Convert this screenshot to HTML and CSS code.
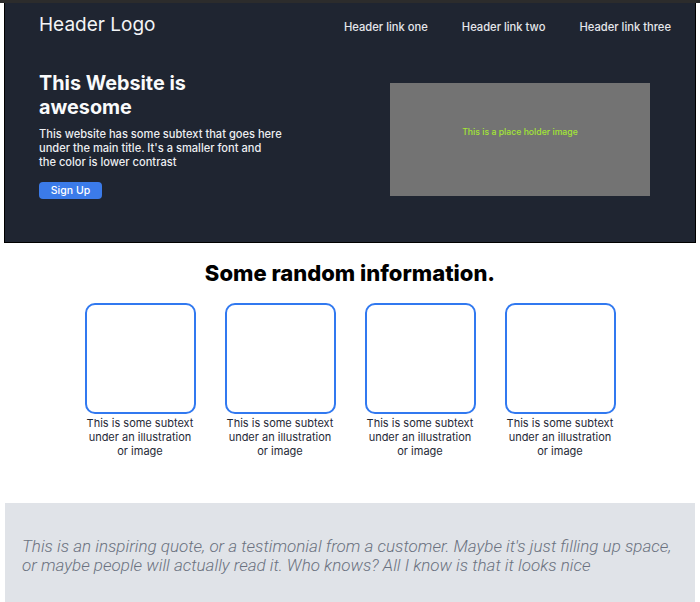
FILE: index.html
```html
<!DOCTYPE html>
<html lang="en">
<head>
<meta charset="utf-8">
<title>This Website is awesome</title>
<link rel="stylesheet" href="styles.css">
</head>
<body>
<div class="topstrip"></div>
<header class="hero">
  <nav class="nav">
    <div class="logo">Header Logo</div>
    <ul class="links">
      <li><a href="#">Header link one</a></li>
      <li><a href="#">Header link two</a></li>
      <li><a href="#">Header link three</a></li>
    </ul>
  </nav>
  <div class="hero-body">
    <div class="hero-text">
      <h1 class="hero-title">This Website is awesome</h1>
      <p class="hero-sub">This website has some subtext that goes here under the main title. It's a smaller font and<br>the color is lower contrast</p>
      <button class="btn">Sign Up</button>
    </div>
    <div class="placeholder">This is a place holder image</div>
  </div>
</header>
<section class="info">
  <h2 class="info-title">Some random information.</h2>
  <div class="cards">
    <div class="card"><div class="card-box"></div><p class="card-text">This is some subtext under an illustration or image</p></div>
    <div class="card"><div class="card-box"></div><p class="card-text">This is some subtext under an illustration or image</p></div>
    <div class="card"><div class="card-box"></div><p class="card-text">This is some subtext under an illustration or image</p></div>
    <div class="card"><div class="card-box"></div><p class="card-text">This is some subtext under an illustration or image</p></div>
  </div>
</section>
<section class="quote">
  <p class="quote-text">This is an inspiring quote, or a testimonial from a customer. Maybe it's just filling up space, or maybe people will actually read it. Who knows? All I know is that it looks nice</p>
</section>
</body>
</html>
```
FILE: styles.css
```css
* { box-sizing: border-box; }
html, body { margin: 0; padding: 0; }
body {
  background: #ffffff;
  font-family: Inter, "Liberation Sans", sans-serif;
  color: #111;
  overflow: hidden;
}
.topstrip {
  height: 3px;
  background: #2c2c2c;
}
.hero {
  margin: 0 4px 0 4px;
  background: #1f2531;
  border: 1px solid #000;
  border-top: none;
  padding: 10px 24px 43px 34px;
}
.nav {
  display: flex;
  justify-content: space-between;
  align-items: baseline;
}
.logo {
  font-size: 19px;
  line-height: 24px;
  color: #f3f4f6;
}
.links {
  list-style: none;
  margin: 0;
  padding: 0;
  display: flex;
  gap: 34px;
}
.links a {
  color: #e5e7eb;
  text-decoration: none;
  font-size: 11.2px;
  font-weight: 500;
  line-height: 16px;
}
.hero-body {
  display: flex;
  align-items: flex-start;
  margin-top: 34px;
}
.hero-text {
  width: 246px;
}
.hero-title {
  margin: 0;
  max-width: 210px;
  font-size: 19.8px;
  line-height: 24px;
  font-weight: 700;
  color: #f9fafb;
}
.hero-sub {
  margin: 8px 0 0;
  font-size: 11.1px;
  font-weight: 500;
  line-height: 14px;
  color: #eceef1;
}
.btn {
  margin-top: 13px;
  display: block;
  width: 63px;
  height: 17px;
  padding: 0;
  border: none;
  border-radius: 4px;
  background: #3b7be9;
  color: #fff;
  font-family: inherit;
  font-size: 10.5px;
  font-weight: 500;
}
.placeholder {
  margin-left: 105px;
  margin-top: 12px;
  width: 260px;
  height: 113px;
  background: #737373;
  color: #a3e635;
  font-size: 8.7px;
  font-weight: 500;
  text-align: center;
  padding-top: 44px;
}
.info {
  padding: 18px 5px 45px;
}
.info-title {
  margin: 0;
  text-align: center;
  font-size: 22px;
  line-height: 24px;
  font-weight: 800;
  color: #000;
}
.cards {
  margin-top: 18px;
  display: flex;
  justify-content: center;
  gap: 29px;
}
.card {
  width: 111px;
}
.card-box {
  width: 111px;
  height: 111px;
  border: 2px solid #3179f0;
  border-radius: 10px;
}
.card-text {
  margin: 2px 0 0;
  font-size: 11px;
  line-height: 14px;
  text-align: center;
  color: #1f2937;
}
.quote {
  margin: 0 5px;
  background: #e0e3e8;
  padding: 34px 17px 40px;
}
.quote-text {
  margin: 0;
  font-family: Roboto, "Liberation Sans", sans-serif;
  font-style: italic;
  font-weight: 300;
  font-size: 17px;
  line-height: 19px;
  color: #6b7280;
}
```
